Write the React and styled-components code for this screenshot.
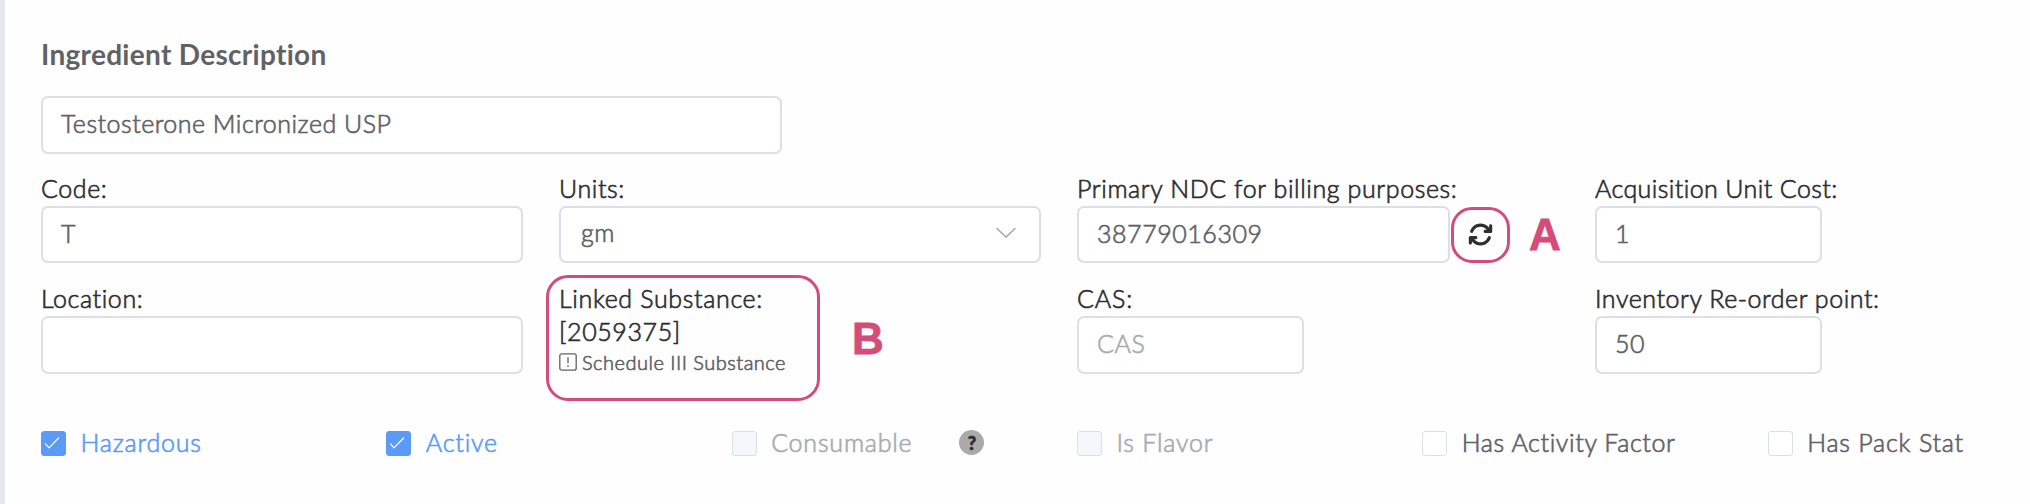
import React from 'react';
import styled, { createGlobalStyle, css } from 'styled-components';
import { FaArrowsRotate } from 'react-icons/fa6';

const GlobalStyle = createGlobalStyle`
  *, *::before, *::after { box-sizing: border-box; }
  html, body { margin: 0; background: #fefefe; }
  body {
    font-family: Lato, 'Open Sans', sans-serif;
    font-size: 25px;
    font-weight: 300;
    -webkit-text-stroke: 0.65px currentColor;
    font-variant-ligatures: none;
    color: #2c2e30;
  }
`;

const accent = '#d54c7a';

const Page = styled.main`
  height: 504px;
  overflow: hidden;
  border-left: 5px solid #e6e8ed;
  padding: 37px 0 0 36px;
  background: #fefefe;
`;

const Heading = styled.h1`
  margin: 0 0 25px;
  font-size: 28px;
  line-height: 34px;
  font-weight: 700;
  letter-spacing: 0.3px;
  -webkit-text-stroke: 0;
  color: #616266;
`;

const FieldRow = styled.div`
  display: grid;
  grid-template-columns: repeat(3, 482px) 1fr;
  column-gap: 36px;
  height: ${(p) => p.$height}px;
  margin-top: ${(p) => p.$top}px;
`;

const Field = styled.div`
  position: relative;
  display: flex;
  flex-direction: column;
  align-items: flex-start;
  white-space: nowrap;
`;

const Label = styled.label`
  height: 34px;
  line-height: 32px;
  letter-spacing: ${(p) => p.$track ?? 0.6}px;
`;

const Control = styled.div`
  display: flex;
  align-items: center;
  justify-content: space-between;
  width: ${(p) => p.$width}px;
  height: ${(p) => p.$height ?? 57}px;
  padding: 0 23px 4px 18px;
  border: 2px solid #dedfe6;
  border-radius: 7px;
  background: #fff;
  color: ${(p) => (p.$placeholder ? '#a8abb2' : '#606266')};
  letter-spacing: ${(p) => p.$track ?? 0.55}px;
`;

const SelectControl = styled(Control)`
  padding: 0 23px 5px 20px;
`;

const ControlGroup = styled.div`
  display: flex;
  align-items: center;
`;

const RefreshButton = styled.button`
  display: flex;
  align-items: center;
  justify-content: center;
  width: 59px;
  height: 56px;
  margin-left: 1px;
  padding: 0;
  border: 3px solid ${accent};
  border-radius: 21px;
  background: transparent;
  color: #2c2e30;
`;

const markerText = css`
  font-family: 'Liberation Sans', Arial, sans-serif;
  font-size: 44px;
  line-height: 50px;
  font-weight: 700;
  -webkit-text-stroke: 0.8px ${accent};
  color: ${accent};
`;

const InlineMarker = styled.span`
  ${markerText}
  margin-left: 19px;
  padding-top: 1px;
`;

const Callout = styled.div`
  position: absolute;
  left: -13px;
  top: -7px;
  width: 274px;
  height: 126px;
  border: 3px solid ${accent};
  border-radius: 22px;
`;

const FloatingMarker = styled.span`
  ${markerText}
  position: absolute;
  left: 293px;
  top: 32px;
`;

const SubstanceCode = styled.span`
  line-height: 31px;
  letter-spacing: 0.6px;
`;

const ScheduleNote = styled.span`
  display: flex;
  align-items: center;
  gap: 5px;
  font-size: 20px;
  line-height: 30px;
  letter-spacing: 0.5px;
  color: #606266;
`;

const OptionRow = styled.div`
  display: grid;
  grid-template-columns: repeat(5, 345.33px) 1fr;
  margin-top: 57px;
`;

const tones = { checked: '#5b9bf8', disabled: '#a8abb2', plain: '#606266' };
const fills = { checked: '#5b9bf8', disabled: '#f5f7fc', plain: '#fff' };

const Option = styled.label`
  display: flex;
  align-items: center;
  height: 25px;
  white-space: nowrap;
  color: ${(p) => tones[p.$state]};
`;

const Box = styled.span`
  display: flex;
  align-items: center;
  justify-content: center;
  width: 25px;
  height: 25px;
  border: 1px solid ${(p) => (p.$state === 'checked' ? '#5b9bf8' : '#dcdfe6')};
  border-radius: 3px;
  background: ${(p) => fills[p.$state]};
`;

const OptionText = styled.span`
  margin-left: 14.5px;
  padding-bottom: 4px;
  letter-spacing: ${(p) => p.$track ?? 0.8}px;
`;

const Help = styled.span`
  display: flex;
  align-items: center;
  justify-content: center;
  width: 25px;
  height: 25px;
  margin: -2px 0 0 47px;
  border-radius: 50%;
  background: #a9aaaa;
  color: #2c2e30;
  font-size: 18px;
  font-weight: 900;
`;

const Chevron = () => (
  <svg width="20" height="12" viewBox="0 0 20 12" fill="none" stroke="#a8abb2" strokeWidth="1.6" strokeLinecap="round" strokeLinejoin="round">
    <path d="M1 2.5 10 11.2 19 2.5" />
  </svg>
);

const Check = () => (
  <svg width="23" height="23" viewBox="0 0 23 23" fill="none" stroke="#fff" strokeWidth="1.2" strokeLinecap="round" strokeLinejoin="round">
    <path d="M3.5 11.8 7 15.8 16.6 6" />
  </svg>
);

const WarningSquare = () => (
  <svg width="18" height="18" viewBox="0 0 18 18" fill="none" stroke="#606266" strokeWidth="1.3">
    <rect x="0.8" y="0.8" width="16.4" height="16.4" rx="2" />
    <path d="M9 4.3v6M9 12.3v1.7" />
  </svg>
);

const options = [
  { text: 'Hazardous', state: 'checked' },
  { text: 'Active', state: 'checked' },
  { text: 'Consumable', state: 'disabled', help: true },
  { text: 'Is Flavor', state: 'disabled' },
  { text: 'Has Activity Factor', state: 'plain', track: 0.62 },
  { text: 'Has Pack Stat', state: 'plain' },
];

export default function App() {
  return (
    <Page>
      <GlobalStyle />
      <Heading>Ingredient Description</Heading>
      <Control $width={741} $height={58} $track={0.5}>Testosterone Micronized USP</Control>

      <FieldRow $top={18} $height={91}>
        <Field>
          <Label>Code:</Label>
          <Control $width={482}>T</Control>
        </Field>
        <Field>
          <Label>Units:</Label>
          <SelectControl $width={482}>
            gm
            <Chevron />
          </SelectControl>
        </Field>
        <Field>
          <Label>Primary NDC for billing purposes:</Label>
          <ControlGroup>
            <Control $width={373}>38779016309</Control>
            <RefreshButton aria-label="Refresh">
              <FaArrowsRotate size={25} />
            </RefreshButton>
            <InlineMarker>A</InlineMarker>
          </ControlGroup>
        </Field>
        <Field>
          <Label $track={0.4}>Acquisition Unit Cost:</Label>
          <Control $width={227}>1</Control>
        </Field>
      </FieldRow>

      <FieldRow $top={19} $height={92}>
        <Field>
          <Label>Location:</Label>
          <Control $width={482} $height={58} />
        </Field>
        <Field>
          <Label $track={0.65}>Linked Substance:</Label>
          <SubstanceCode>[2059375]</SubstanceCode>
          <ScheduleNote>
            <WarningSquare />
            Schedule III Substance
          </ScheduleNote>
          <Callout />
          <FloatingMarker>B</FloatingMarker>
        </Field>
        <Field>
          <Label $track={0.9}>CAS:</Label>
          <Control $width={227} $height={58} $placeholder>CAS</Control>
        </Field>
        <Field>
          <Label $track={0.55}>Inventory Re-order point:</Label>
          <Control $width={227} $height={58}>50</Control>
        </Field>
      </FieldRow>

      <OptionRow>
        {options.map((o) => (
          <Option key={o.text} $state={o.state}>
            <Box $state={o.state}>{o.state === 'checked' && <Check />}</Box>
            <OptionText $track={o.track}>{o.text}</OptionText>
            {o.help && <Help>?</Help>}
          </Option>
        ))}
      </OptionRow>
    </Page>
  );
}
